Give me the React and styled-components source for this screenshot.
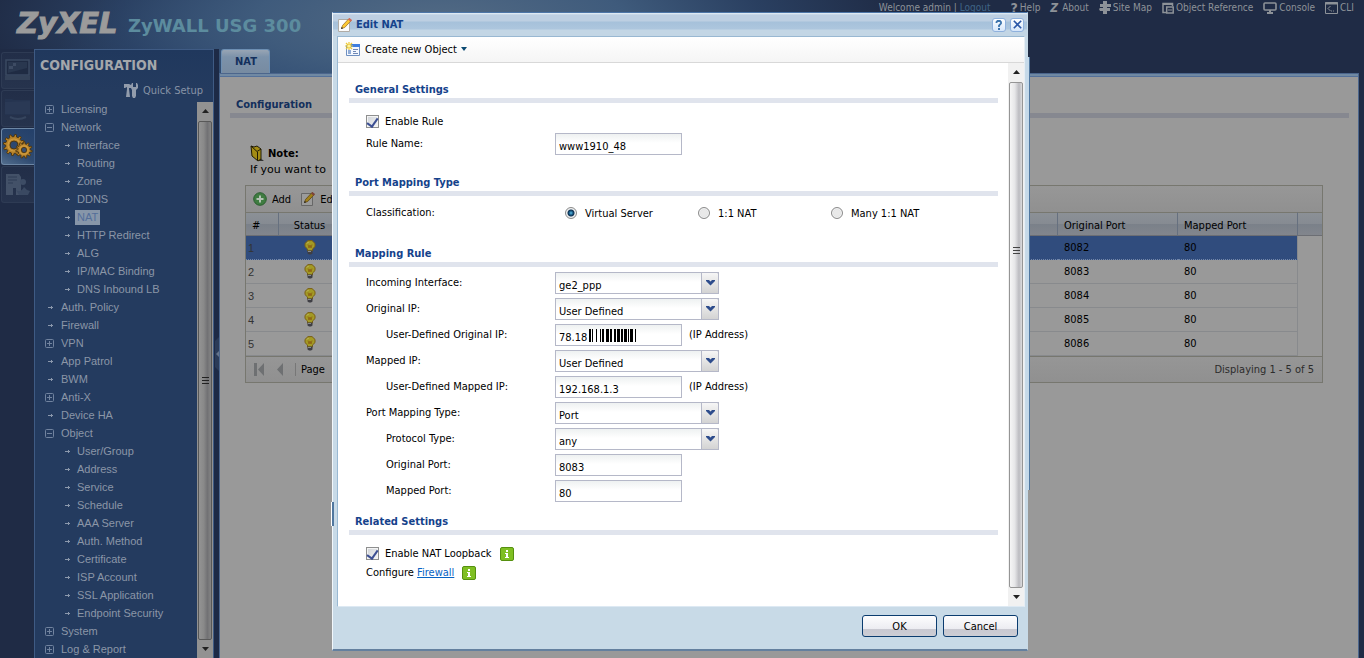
import React, {useState} from 'react'
import styled, {createGlobalStyle} from 'styled-components'

const treeItems = [
  {label: 'Licensing', icon: 'plus'},
  {label: 'Network', icon: 'minus'},
  {label: 'Interface', child: true},
  {label: 'Routing', child: true},
  {label: 'Zone', child: true},
  {label: 'DDNS', child: true},
  {label: 'NAT', child: true, selected: true},
  {label: 'HTTP Redirect', child: true},
  {label: 'ALG', child: true},
  {label: 'IP/MAC Binding', child: true},
  {label: 'DNS Inbound LB', child: true},
  {label: 'Auth. Policy'},
  {label: 'Firewall'},
  {label: 'VPN', icon: 'plus'},
  {label: 'App Patrol'},
  {label: 'BWM'},
  {label: 'Anti-X', icon: 'plus'},
  {label: 'Device HA'},
  {label: 'Object', icon: 'minus'},
  {label: 'User/Group', child: true},
  {label: 'Address', child: true},
  {label: 'Service', child: true},
  {label: 'Schedule', child: true},
  {label: 'AAA Server', child: true},
  {label: 'Auth. Method', child: true},
  {label: 'Certificate', child: true},
  {label: 'ISP Account', child: true},
  {label: 'SSL Application', child: true},
  {label: 'Endpoint Security', child: true},
  {label: 'System', icon: 'plus'},
  {label: 'Log & Report', icon: 'plus'}
]

const natRules = [
  {id: 1, original: '8082', mapped: '80'},
  {id: 2, original: '8083', mapped: '80'},
  {id: 3, original: '8084', mapped: '80'},
  {id: 4, original: '8085', mapped: '80'},
  {id: 5, original: '8086', mapped: '80'}
]

// [x, width] of every bar that masks the address
const maskBars = [
  [0, 2], [3, 1], [7, 1], [11, 1], [13, 2], [17, 3], [21, 2], [25, 2],
  [28, 3], [32, 2], [35, 3], [39, 1], [41, 3], [46, 1]
]

// outline of a cog wheel with its hole
const cogPath = (cx, cy, teeth, outer, inner, hole) => {
  const step = Math.PI * 2 / teeth
  const points = []
  for (let i = 0; i < teeth; i++) {
    const parts = [[inner, 0], [outer, 0.12], [outer, 0.45], [inner, 0.58]]
    parts.forEach(([radius, shift]) => {
      const angle = (i + shift) * step
      points.push(`${cx + radius * Math.cos(angle)} ${cy + radius * Math.sin(angle)}`)
    })
  }
  return `M${points.join('L')}ZM${cx - hole} ${cy}a${hole} ${hole} 0 1 0 ${hole * 2} 0a${hole} ${hole} 0 1 0 ${-hole * 2} 0Z`
}

const TreeIcon = ({type}) => {
  if (!type) {
    return (
      <svg width="9" height="9" viewBox="0 0 9 9" fill="#8b98ac">
        <path d="M3 4h5v1H3zM6 3h1v3H6z" />
      </svg>
    )
  }
  return (
    <svg width="9" height="9" viewBox="0 0 9 9" fill="none" stroke="#71839f">
      <rect x="0.5" y="0.5" width="8" height="8" rx="1" />
      <path d={type === 'plus' ? 'M2 4.5h5M4.5 2v5' : 'M2 4.5h5'} />
    </svg>
  )
}

const MonitorIcon = () => (
  <svg width="26" height="24" viewBox="0 0 26 24">
    <rect x="1" y="1" width="23" height="15" fill="#1f2b43" stroke="#3a4961" strokeWidth="1.5" />
    <path d="M3 3h19v6L3 14z" fill="#29374f" />
    <path d="M4 7h4v3H4zM8 4h3v3H8z" fill="#3d4b63" />
    <path d="M0 17h25v4H0z" fill="#344259" />
  </svg>
)

const ScreenIcon = () => (
  <svg width="26" height="24" viewBox="0 0 26 24">
    <path d="M0 2h7l2 1h16v15H0z" fill="#253450" />
    <path d="M0 5l25-1v13H0z" fill="#2a3955" />
    <path d="M5 20q8 4 16 0" fill="none" stroke="#36455e" strokeWidth="2" />
  </svg>
)

const ReportIcon = () => (
  <svg width="26" height="24" viewBox="0 0 26 24">
    <path d="M1 1h13l2 3v18h-5v-7H8v7H1z" fill="#435168" />
    <path d="M3 4h9M3 7h9M3 10h5" stroke="#2e3c55" />
    <circle cx="18" cy="9" r="3" fill="#3d4c65" />
    <path d="M11 17q5 3 8-3l3 3 3 1-2 4h-9z" fill="#3a4962" />
  </svg>
)

const GearIcon = () => (
  <svg width="30" height="26" viewBox="0 0 30 26" fillRule="evenodd">
    <path d={cogPath(11, 11, 12, 10.6, 8.4, 4)} fill="#b8832a" stroke="#4a3410" strokeWidth="0.9" />
    <circle cx="11" cy="11" r="6" fill="none" stroke="#cf9c3f" strokeWidth="1.2" />
    <path d={cogPath(21, 16, 11, 8.2, 6.2, 2.6)} fill="#b8832a" stroke="#4a3410" strokeWidth="0.9" />
    <circle cx="21" cy="16" r="4.2" fill="none" stroke="#cf9c3f" strokeWidth="1.2" />
    <circle cx="21" cy="16" r="2" fill="#3a506f" />
  </svg>
)

const ToolsIcon = () => (
  <svg width="15" height="15" viewBox="0 0 15 15" fill="#929cac">
    <path d="M0 1h5l2 1v3H5V4h0v2l1 8H2l1-8V4L1 5H0z" />
    <path d="M8 0h1v4h3V0h1l1 2v3l-2 2v6l-1 2H9l-1-2V7L7 5V2z" />
  </svg>
)

const SiteMapIcon = () => (
  <svg width="12" height="13" viewBox="0 0 12 13" fill="#8d9298">
    <path d="M4 0h4v3h4v3H8v1h3v3H8v3H4v-3H1l-1-2 1-1h3V6H1V3h3z" />
  </svg>
)

const ObjectIcon = () => (
  <svg width="12" height="12" viewBox="0 0 12 12">
    <path d="M4 10.500H1V1.500h9.500V4" fill="none" stroke="#8d9298" strokeWidth="1.500" />
    <path d="M1 1h10v2H1z" fill="#8d9298" />
    <path d="M4.700 5h6.500v6H4.700z" fill="none" stroke="#8d9298" strokeWidth="1.500" />
    <path d="M6 8h4" stroke="#8d9298" />
  </svg>
)

const ConsoleIcon = () => (
  <svg width="14" height="12" viewBox="0 0 14 12">
    <rect x="1" y="1" width="12" height="7" rx="1" fill="none" stroke="#8d9298" strokeWidth="1.6" />
    <path d="M4 11h6M7 8v3" stroke="#8d9298" strokeWidth="2" />
  </svg>
)

const CliIcon = () => (
  <svg width="13" height="12" viewBox="0 0 13 12" fill="none" stroke="#8d9298">
    <path d="M0.500 0.500h12v11h-12z" />
    <path d="M0 1.500h13" strokeWidth="2" />
    <path d="M5.500 4L3 6.500 5.500 9M6 9h1M8 9h1" />
  </svg>
)

const NoteIcon = () => (
  <svg width="15" height="17" viewBox="0 0 15 17" stroke="#211c05">
    <path d="M9 12l5 4H8z" fill="#333" stroke="none" />
    <path d="M1 1l3 1 3-1 4 3v10l-3 2-6-5z" fill="#a48c14" />
    <path d="M1 1l6 5.500 4-2.500M7.500 7v8.500" fill="none" />
  </svg>
)

const AddIcon = () => (
  <svg width="14" height="14" viewBox="0 0 14 14">
    <circle cx="7" cy="7" r="6.300" fill="#3f7c41" stroke="#2b5e30" />
    <path d="M7 3.500v7M3.500 7h7" stroke="#b4c2b4" strokeWidth="2" />
  </svg>
)

const EditIcon = ({dim}) => (
  <svg width="14" height="14" viewBox="0 0 14 14">
    <path d="M0.500 1.500h11v12h-11z" fill={dim ? '#9b9b9b' : '#fcfcfc'} stroke={dim ? '#676767' : '#b0aca6'} />
    <path d="M3.500 10.500l1-3 6.500-7 2.300 2-6.600 7z" fill={dim ? '#a08019' : '#fcc832'} stroke={dim ? '#5f4613' : '#a0742b'} strokeWidth="0.8" />
    <path d="M10 1.500l1.500-1.500 2.500 2-1.500 1.800z" fill={dim ? '#7d423b' : '#d5695d'} />
    <path d="M3 11l.7-2 1.500 1.300z" fill="#222" />
  </svg>
)

const BulbIcon = () => (
  <svg width="12" height="15" viewBox="0 0 12 15">
    <path d="M4 .6h4l3 2.800v3.200L8.500 9v2h-5V9L1 6.600V3.400z" fill="#a39a24" stroke="#7a5f16" />
    <path d="M3 3.500L4.500 2" stroke="#c0ba6a" />
    <path d="M4 4.500l1 3.500 1-3 1 3 1-3.500" fill="none" stroke="#8a5a10" strokeWidth="0.8" />
    <path d="M3.500 10.500h5v3l-1.500 1H5l-1.500-1z" fill="#3e3e44" />
    <path d="M4 11.500h3" stroke="#8a8a8a" />
  </svg>
)

const NewObjectIcon = () => (
  <svg width="16" height="14" viewBox="0 0 16 14">
    <path d="M1.500 3.500h13v10h-13z" fill="#f4f8ff" stroke="#6e8fc0" />
    <path d="M6 2h9v3H6z" fill="#3f7fe0" />
    <path d="M3 8h3v4H3z" fill="#90acd6" />
    <path d="M8 7.500h5M8 9.500h3M8 11.500h5" stroke="#6e87b4" />
    <path d="M4 0v8M0 4h8M1 1l6 6M7 1L1 7" stroke="#edc933" strokeWidth="1.200" />
    <circle cx="4" cy="4" r="1.600" fill="#fff3a0" />
  </svg>
)

const ChevronIcon = () => (
  <svg width="9" height="6" viewBox="0 0 9 6" fill="#2d4c8c">
    <path d="M0 0h3l1.500 1.500L6 0h3v1L4.500 5.500 0 1z" />
  </svg>
)

const InfoIcon = () => (
  <svg width="14" height="14" viewBox="0 0 14 14">
    <rect x="0.500" y="0.500" width="13" height="13" rx="1.500" fill="#7fbf22" stroke="#55900f" />
    <path d="M6 3h2v2H6zM5 6h3v4h1v1H5v-1h1V7H5z" fill="#fff" />
  </svg>
)

const MaskedDigits = () => (
  <svg width="48" height="13" viewBox="0 0 48 13">
    {maskBars.map(([x, width]) => (
      <rect key={x} x={x} y="0" width={width} height="13" fill="#000" />
    ))}
  </svg>
)

const ArrowIcon = ({down}) => (
  <svg width="7" height="4" viewBox="0 0 7 4">
    <path d={down ? 'M0 0h7L3.500 4z' : 'M0 4h7L3.500 0z'} fill="#222" />
  </svg>
)

const ScrollBar = ({dim}) => (
  <Scroll $dim={dim} aria-hidden="true">
    <ScrollArrow>
      <ArrowIcon />
    </ScrollArrow>
    <ScrollThumb $dim={dim}>
      <svg width="7" height="8" viewBox="0 0 7 8">
        <path d="M0 0.500h7M0 3.500h7M0 6.500h7" stroke={dim ? '#222' : '#444'} />
      </svg>
    </ScrollThumb>
    <ScrollArrow>
      <ArrowIcon down />
    </ScrollArrow>
  </Scroll>
)

const TextField = ({id, label, indent, value, note, masked}) => (
  <FormRow>
    <FieldLabel htmlFor={id} $indent={indent}>
      {label}
    </FieldLabel>
    <Control>
      <TextInput id={id} type="text" defaultValue={value} />
      {masked && (
        <Mask>
          <MaskedDigits />
        </Mask>
      )}
    </Control>
    {note && <FieldNote>{note}</FieldNote>}
  </FormRow>
)

const SelectField = ({id, label, indent, value}) => (
  <FormRow>
    <FieldLabel htmlFor={id} $indent={indent}>
      {label}
    </FieldLabel>
    <Control>
      <Select id={id} defaultValue={value}>
        <option>{value}</option>
      </Select>
      <SelectArrow>
        <ChevronIcon />
      </SelectArrow>
    </Control>
  </FormRow>
)

const EditNatDialog = () => {
  const [type, setType] = useState('Virtual Server')
  return (
    <Overlay>
      <Dialog role="dialog" aria-labelledby="dialog-title">
        <TitleBar>
          <EditIcon />
          <DialogTitle id="dialog-title">Edit NAT</DialogTitle>
          <TitleButton type="button" aria-label="Help">
            <svg width="8" height="10" viewBox="0 0 8 10">
              <path d="M1.500 3V2L2.500 1h2.500l1 1v1.500L4 5.500V7" fill="none" stroke="#3d74ad" strokeWidth="1.800" />
              <path d="M3 8h2v2H3z" fill="#3d74ad" />
            </svg>
          </TitleButton>
          <TitleButton type="button" aria-label="Close">
            <svg width="9" height="9" viewBox="0 0 9 9">
              <path d="M.8.800l7.400 7.400M8.200.800L.8 8.200" stroke="#2b57a8" strokeWidth="1.600" />
            </svg>
          </TitleButton>
        </TitleBar>
        <DialogPanel>
          <DialogToolbar>
            <MenuButton type="button">
              <NewObjectIcon />
              Create new Object
              <svg width="6" height="4" viewBox="0 0 6 4">
                <path d="M0 0h6L3 4z" fill="#0c4a72" />
              </svg>
            </MenuButton>
          </DialogToolbar>
          <DialogBody>
            <Form>
              <SectionTitle>General Settings</SectionTitle>
              <Fields $top={9} $bottom={16}>
                <CheckRow>
                  <Checkbox id="enable-rule" type="checkbox" defaultChecked />
                  <label htmlFor="enable-rule">Enable Rule</label>
                </CheckRow>
                <TextField id="rule-name" label="Rule Name:" value="www1910_48" />
              </Fields>
              <SectionTitle>Port Mapping Type</SectionTitle>
              <Fields $top={4} $bottom={18}>
                <FormRow role="radiogroup" aria-labelledby="classification">
                  <FieldLabel as="span" id="classification">
                    Classification:
                  </FieldLabel>
                  {['Virtual Server', '1:1 NAT', 'Many 1:1 NAT'].map(name => (
                    <RadioLabel key={name}>
                      <Radio
                        type="radio"
                        name="classification"
                        checked={type === name}
                        onChange={() => setType(name)}
                      />
                      {name}
                    </RadioLabel>
                  ))}
                </FormRow>
              </Fields>
              <SectionTitle>Mapping Rule</SectionTitle>
              <Fields $top={3} $bottom={8}>
                <SelectField id="incoming" label="Incoming Interface:" value="ge2_ppp" />
                <SelectField id="original-ip" label="Original IP:" value="User Defined" />
                <TextField
                  id="user-original-ip"
                  label="User-Defined Original IP:"
                  value="78.18"
                  note="(IP Address)"
                  indent
                  masked
                />
                <SelectField id="mapped-ip" label="Mapped IP:" value="User Defined" />
                <TextField
                  id="user-mapped-ip"
                  label="User-Defined Mapped IP:"
                  value="192.168.1.3"
                  note="(IP Address)"
                  indent
                />
                <SelectField id="mapping-type" label="Port Mapping Type:" value="Port" />
                <SelectField id="protocol" label="Protocol Type:" value="any" indent />
                <TextField id="original-port" label="Original Port:" value="8083" indent />
                <TextField id="mapped-port" label="Mapped Port:" value="80" indent />
              </Fields>
              <SectionTitle>Related Settings</SectionTitle>
              <Fields $top={9} $bottom={24}>
                <CheckRow>
                  <Checkbox id="loopback" type="checkbox" defaultChecked />
                  <label htmlFor="loopback">Enable NAT Loopback</label>
                  <InfoSlot>
                    <InfoIcon />
                  </InfoSlot>
                </CheckRow>
                <CheckRow>
                  <span>
                    Configure <FormLink href="#firewall">Firewall</FormLink>
                  </span>
                  <InfoSlot>
                    <InfoIcon />
                  </InfoSlot>
                </CheckRow>
              </Fields>
            </Form>
            <ScrollBar />
          </DialogBody>
        </DialogPanel>
        <DialogFooter>
          <DialogButton type="button">OK</DialogButton>
          <DialogButton type="button">Cancel</DialogButton>
        </DialogFooter>
      </Dialog>
    </Overlay>
  )
}

const Sidebar = () => (
  <SidePanel>
    <SideTitle>CONFIGURATION</SideTitle>
    <QuickSetup href="#setup">
      <ToolsIcon />
      Quick Setup
    </QuickSetup>
    <TreeArea>
      <Tree>
        {treeItems.map(({label, icon, child, selected}) => (
          <TreeRow key={label} $child={child}>
            <TreeIcon type={icon} />
            <TreeLink href={`#${label}`} $selected={selected}>
              {label}
            </TreeLink>
          </TreeRow>
        ))}
      </Tree>
      <ScrollBar dim />
    </TreeArea>
  </SidePanel>
)

const RuleGrid = () => (
  <Grid>
    <GridToolbar>
      <GridButton type="button">
        <AddIcon />
        Add
      </GridButton>
      <GridButton type="button">
        <EditIcon dim />
        Edit
      </GridButton>
    </GridToolbar>
    <Table>
      <colgroup>
        <col width="33" />
        <col width="62" />
        <col />
        <col width="120" />
        <col width="120" />
        <col width="24" />
      </colgroup>
      <thead>
        <tr>
          <Th>#</Th>
          <Th $center>Status</Th>
          <Th />
          <Th>Original Port</Th>
          <Th>Mapped Port</Th>
          <Th />
        </tr>
      </thead>
      <tbody>
        {natRules.map(({id, original, mapped}) => (
          <GridRow key={id} $selected={id === 1}>
            <NumberCell>{id}</NumberCell>
            <Td $center>
              <BulbIcon />
            </Td>
            <Td />
            <Td>{original}</Td>
            <Td>{mapped}</Td>
            <FillerCell />
          </GridRow>
        ))}
      </tbody>
    </Table>
    <GridFooter>
      <svg width="36" height="13" viewBox="0 0 36 13" fill="#6e7072">
        <path d="M2 0h3v13H2zM12 0v13L6 6.500zM31 0v13l-6-6.500z" />
      </svg>
      <PageText>Page</PageText>
      <Displaying>Displaying 1 - 5 of 5</Displaying>
    </GridFooter>
  </Grid>
)

const App = () => (
  <>
    <GlobalStyle />
    <Page>
      <Header>
        <Logo>ZyXEL</Logo>
        <Product>ZyWALL USG 300</Product>
        <HeaderLinks>
          <span>
            Welcome admin | <Logout href="#logout">Logout</Logout>
          </span>
          <HeaderLink href="#help">
            <HelpMark>?</HelpMark>Help
          </HeaderLink>
          <HeaderLink href="#about">
            <AboutMark>Z</AboutMark>About
          </HeaderLink>
          <HeaderLink href="#sitemap">
            <SiteMapIcon />
            Site Map
          </HeaderLink>
          <HeaderLink href="#objects">
            <ObjectIcon />
            Object Reference
          </HeaderLink>
          <HeaderLink href="#console">
            <ConsoleIcon />
            Console
          </HeaderLink>
          <HeaderLink href="#cli">
            <CliIcon />
            CLI
          </HeaderLink>
        </HeaderLinks>
      </Header>
      <Body>
        <Rail>
          <RailButton type="button" aria-label="Dashboard">
            <MonitorIcon />
          </RailButton>
          <RailButton type="button" aria-label="Monitor">
            <ScreenIcon />
          </RailButton>
          <RailButton type="button" aria-label="Configuration" $active>
            <GearIcon />
          </RailButton>
          <RailButton type="button" aria-label="Maintenance">
            <ReportIcon />
          </RailButton>
        </Rail>
        <Sidebar />
        <Splitter>
          <svg width="4" height="34" viewBox="0 0 4 34">
            <path d="M4 0v34L0 30V4z" fill="#2b3b58" />
            <path d="M4 14v6L1 17z" fill="#65748b" />
          </svg>
        </Splitter>
        <Main>
          <TabBar>
            <Tab type="button">NAT</Tab>
          </TabBar>
          <Panel>
            <PanelTitle>Configuration</PanelTitle>
            <Note>
              <NoteHead>
                <NoteIcon />
                <strong>Note:</strong>
              </NoteHead>
              If you want to
            </Note>
            <RuleGrid />
          </Panel>
        </Main>
      </Body>
      <EditNatDialog />
    </Page>
  </>
)

export default App

const tahoma = `'DejaVu Sans Condensed', 'DejaVu Sans', sans-serif`

const GlobalStyle = createGlobalStyle`
  * {
    box-sizing: border-box;
  }

  body {
    margin: 0;
    font-family: ${tahoma};
    font-size: 11px;
    color: #000;
    background: #1f2b45;
  }

  button, input, select {
    font: inherit;
    color: inherit;
    margin: 0;
  }

  svg {
    display: block;
    flex: none;
  }
`
const Page = styled.div`
  position: relative;
  display: flex;
  flex-direction: column;
  min-height: 100vh;
  overflow: hidden;
  background: radial-gradient(ellipse 460px 130px at 440px 20px, #526a84 0%, #3f5b7c 40%, rgba(49, 77, 115, 0.6) 70%, rgba(31, 43, 69, 0) 100%),
    radial-gradient(ellipse 260px 180px at 300px 110px, #2e4f7f 0%, rgba(31, 43, 69, 0) 100%),
    #1f2b45;
`
const Header = styled.header`
  display: flex;
  height: 49px;
  padding-left: 17px;
  color: #8d9298;
`
const Logo = styled.div`
  width: 111px;
  font: italic 900 29px/46px 'DejaVu Sans', sans-serif;
  color: #9b9b9b;
  -webkit-text-stroke: 1px #9b9b9b;
`
const Product = styled.div`
  font: bold 18px/52px 'DejaVu Sans', sans-serif;
  color: #5c8c9e;
  white-space: nowrap;
`
const HeaderLinks = styled.nav`
  display: flex;
  gap: 10px;
  margin-left: auto;
  padding-right: 10px;
  height: 15px;
  align-items: center;
  font-size: 10px;
  white-space: nowrap;
`
const HeaderLink = styled.a`
  display: flex;
  align-items: center;
  gap: 2px;
  color: inherit;
  text-decoration: none;
`
const Logout = styled.a`
  margin-right: 10px;
  color: #3f6587;
  text-decoration: none;
`
const HelpMark = styled.span`
  font-size: 14px;
  font-weight: bold;
`
const AboutMark = styled.span`
  margin-right: 2px;
  font-size: 12px;
  font-style: italic;
  font-weight: bold;
`
const Body = styled.div`
  display: flex;
  flex: 1;
`
const Rail = styled.nav`
  display: flex;
  flex-direction: column;
  gap: 1px;
  width: 34px;
  padding: 3px 0 0 1px;
  background: #1f2b45;
`
const RailButton = styled.button`
  display: flex;
  align-items: center;
  justify-content: center;
  height: 37px;
  padding: 0;
  border: 1px solid ${props => (props.$active ? '#6d87a5' : '#2e3b54')};
  border-right: 0;
  border-radius: 3px 0 0 3px;
  background: ${props =>
    props.$active
      ? 'linear-gradient(25deg, #526d8d 0%, #2f4a70 35%, #24406a 100%)'
      : 'linear-gradient(#222e48, #26334d)'};
`
const SidePanel = styled.aside`
  display: flex;
  flex-direction: column;
  width: 180px;
  border: 1px solid #3f5b84;
  border-bottom: 0;
  background: linear-gradient(#20385d 0, #243b5f 40px);
`
const SideTitle = styled.h1`
  margin: 0;
  padding: 6px 0 0 5px;
  font: bold 14px/18px 'DejaVu Sans Condensed', sans-serif;
  color: #a4a7ab;
`
const QuickSetup = styled.a`
  display: flex;
  align-items: center;
  justify-content: flex-end;
  gap: 4px;
  height: 24px;
  margin-top: 4px;
  padding-right: 10px;
  color: #8793a6;
  text-decoration: none;
`
const TreeArea = styled.div`
  display: flex;
  flex: 1;
`
const Tree = styled.ul`
  flex: 1;
  margin: -2px 0 0;
  padding: 0;
  list-style: none;
  font-family: 'Liberation Sans', sans-serif;
`
const TreeRow = styled.li`
  display: flex;
  align-items: center;
  gap: ${props => (props.$child ? 4 : 5)}px;
  height: 18px;
  padding-left: ${props => (props.$child ? 27 : 10)}px;
`
const TreeLink = styled.a`
  padding: 0 2px;
  line-height: 15px;
  white-space: nowrap;
  text-decoration: none;
  color: ${props => (props.$selected ? '#536e9a' : '#8b96a7')};
  background: ${props => (props.$selected ? '#8796a9' : 'transparent')};
`
const Scroll = styled.div`
  display: flex;
  flex-direction: column;
  width: 16px;
  background: ${props => (props.$dim ? '#929292' : '#f1f1f1')};
`
const ScrollArrow = styled.div`
  display: flex;
  align-items: center;
  justify-content: center;
  height: 18px;
`
const ScrollThumb = styled.div`
  display: flex;
  flex: 1;
  align-items: flex-start;
  justify-content: center;
  margin: 1px 1px 0;
  padding-top: ${props => (props.$dim ? 255 : 164)}px;
  border: 1px solid ${props => (props.$dim ? '#585858' : '#959595')};
  border-radius: 2px;
  background: ${props =>
    props.$dim
      ? 'linear-gradient(90deg, #939393, #898989 40%, #717174 70%, #858585)'
      : 'linear-gradient(90deg, #f6f6f6, #e6e6e8 40%, #bbbbc0 75%, #dcdcde)'};
`
const Splitter = styled.div`
  display: flex;
  align-items: center;
  justify-content: flex-end;
  width: 5px;
  background: #1d2a46;
`
const Main = styled.main`
  display: flex;
  flex: 1;
  flex-direction: column;
  min-width: 0;
  margin-right: 5px;
`
const TabBar = styled.div`
  display: flex;
  height: 24px;
  padding-left: 2px;
`
const Tab = styled.button`
  width: 49px;
  padding: 0 0 0 1px;
  border: 1px solid #6d8fb3;
  border-bottom: 0;
  border-radius: 3px 3px 0 0;
  background: linear-gradient(#98a5b4, #7c92aa 30%, #778ba1);
  font-weight: bold;
  color: #132f5c;
`
const Panel = styled.section`
  flex: 1;
  padding: 18px 9px 0 10px;
  border: 1px solid #4c668c;
  border-bottom: 0;
  background: #999;
  box-shadow: inset 0 2px 0 #7089a3, inset 0 3px 0 #54719a;
`
const PanelTitle = styled.h2`
  margin: 0;
  padding: 4px 6px 0;
  border-bottom: 5px solid #868890;
  font-size: 11px;
  line-height: 17px;
  color: #132f5c;
`
const Note = styled.div`
  padding: 27px 20px 0;
  font: 11px/16px 'DejaVu Sans', sans-serif;
`
const NoteHead = styled.div`
  display: flex;
  align-items: center;
  gap: 3px;
  height: 17px;
  font-size: 10px;
`
const Grid = styled.div`
  margin: 7px 26px 0 15px;
  border: 1px solid #77776f;
`
const GridToolbar = styled.div`
  display: flex;
  align-items: center;
  gap: 10px;
  height: 26px;
  padding-left: 7px;
  background: linear-gradient(#979797, #909090);
`
const GridButton = styled.button`
  display: flex;
  align-items: center;
  gap: 5px;
  padding: 0;
  border: 0;
  background: none;
`
const Table = styled.table`
  width: 100%;
  table-layout: fixed;
  border-collapse: separate;
  border-spacing: 0;
`
const Th = styled.th`
  height: 24px;
  padding: 2px 6px 0;
  border-top: 1px solid #77776f;
  border-bottom: 1px solid #6c6e74;
  border-right: 1px solid #66707f;
  background: linear-gradient(#8b9096 0, #868b92 50%, #7a8089 50%, #82868d 100%);
  font-weight: normal;
  text-align: ${props => (props.$center ? 'center' : 'left')};

  &:last-child {
    border-right: 0;
  }
`
const Td = styled.td`
  height: 24px;
  padding: 0 6px;
  border-bottom: 1px solid #888a8d;
  text-align: ${props => (props.$center ? 'center' : 'left')};

  svg {
    margin: 0 auto;
  }
`
const NumberCell = styled(Td)`
  padding: 0 2px;
  font-family: 'Liberation Sans', sans-serif;
  color: #333;
`
const FillerCell = styled(Td)`
  border: 0;
`
const GridRow = styled.tr`
  ${Td}:not(:last-child) {
    background: ${props => (props.$selected ? '#304c7d' : 'transparent')};
    border-bottom: 1px ${props => (props.$selected ? 'dotted #7286a8' : 'solid #888a8d')};
  }

  ${Td}:nth-child(5) {
    border-right: 1px solid #888a8d;
  }
`
const GridFooter = styled.div`
  display: flex;
  align-items: center;
  height: 26px;
  padding: 0 8px 0 6px;
  border-top: 1px solid #77776f;
  background: linear-gradient(#969696, #909090);
`
const PageText = styled.span`
  margin-left: 7px;
  padding-left: 5px;
  border-left: 1px solid #777;
`
const Displaying = styled.span`
  margin-left: auto;
  color: #2c2c2c;
`
const Overlay = styled.div`
  position: absolute;
  inset: 12px 4px auto 0;
  display: flex;
  justify-content: center;
`
const Dialog = styled.section`
  position: relative;
  width: 696px;
  padding: 0 2px 0 4px;
  border: 1px solid #f2f7fb;
  border-top-color: #4d76a8;
  border-right-color: #c8dae7;
  border-bottom: 2px solid #64809f;
  background: #c8dae7;

  /* frame of the window below, which shows past both edges */
  &::before {
    content: '';
    position: absolute;
    top: 489px;
    left: -2px;
    width: 2px;
    height: 24px;
    border-left: 1px solid #fff;
    background: #50779f;
  }

  &::after {
    content: '';
    position: absolute;
    top: 44px;
    right: -3px;
    width: 3px;
    height: 433px;
    border-right: 1px solid #50779f;
    background: #c5d9e9;
  }
`
const TitleBar = styled.div`
  display: flex;
  align-items: center;
  gap: 4px;
  height: 23px;
  margin: 0 -2px 0 -4px;
  padding: 0 3px 0 5px;
  background: linear-gradient(#e8f1f8 0, #bdcfe2 2px, #bdcfe2 8px, #a6c1da 9px, #adc6de 16px, #c3d6e5 17px);
`
const DialogTitle = styled.h2`
  flex: 1;
  margin: 0;
  font-size: 11px;
  color: #15428b;
`
const TitleButton = styled.button`
  display: flex;
  align-items: center;
  justify-content: center;
  width: 14px;
  height: 14px;
  padding: 0;
  border: 1px solid #8fb1dd;
  border-radius: 3px;
  background: linear-gradient(#fff, #d5e6fa);
`
const DialogPanel = styled.div`
  border: 1px solid #99b8d2;
  border-right-color: #e6eef5;
  border-bottom-color: #dde9f3;
  background: #fff;
`
const DialogToolbar = styled.div`
  height: 26px;
  padding: 0 7px;
  border-bottom: 1px solid #d8d8d8;
  background: linear-gradient(#fff, #f5f5f5);
`
const MenuButton = styled.button`
  display: flex;
  align-items: center;
  gap: 4px;
  height: 24px;
  padding: 0;
  border: 0;
  background: none;
`
const DialogBody = styled.div`
  display: flex;
`
const Form = styled.form`
  flex: 1;
  padding: 17px 10px 0 11px;
`
const SectionTitle = styled.h3`
  margin: 0;
  padding: 2px 6px 0;
  border-bottom: 5px solid #e0e4ed;
  font-size: 11px;
  line-height: 16px;
  color: #15428b;
`
const Fields = styled.div`
  padding: ${props => props.$top}px 17px ${props => props.$bottom}px;
`
const FormRow = styled.div`
  display: flex;
  align-items: center;
  height: 26px;
`
const FieldLabel = styled.label`
  width: 189px;
  padding: 0 0 2px ${props => (props.$indent ? 20 : 0)}px;
`
const FieldNote = styled.span`
  padding: 0 0 2px 7px;
`
const Control = styled.div`
  position: relative;
  display: flex;
`
const TextInput = styled.input`
  width: 127px;
  height: 22px;
  padding: 4px 3px 0;
  border: 1px solid #b5b8c8;
  border-radius: 0;
  background: linear-gradient(#eef1f1, #fff 9px);
  outline: 0;
`
const Mask = styled.span`
  position: absolute;
  top: 5px;
  left: 34px;
`
const Select = styled.select`
  width: 164px;
  height: 22px;
  padding: 4px 20px 0 3px;
  border: 1px solid #b5b8c8;
  border-radius: 0;
  background: linear-gradient(#eef1f1, #fff 9px);
  outline: 0;
  appearance: none;
`
const SelectArrow = styled.span`
  position: absolute;
  top: 0;
  right: 0;
  display: flex;
  justify-content: center;
  width: 18px;
  height: 22px;
  padding-top: 7px;
  border: 1px solid #b5b8c8;
  border-radius: 0 2px 0 0;
  background: linear-gradient(#f6f6f6, #d3d3d3);
  pointer-events: none;
`
const CheckRow = styled.div`
  display: flex;
  align-items: center;
  gap: 6px;
  height: 19px;
`
const InfoSlot = styled.span`
  margin-left: 2px;
`
const FormLink = styled.a`
  color: #0763c4;
`
const Checkbox = styled.input`
  display: flex;
  justify-content: center;
  width: 13px;
  height: 13px;
  border: 1px solid #8e8f8f;
  background: linear-gradient(135deg, #cfd3d8, #f6f6f6);
  box-shadow: inset 0 0 0 1px #f4f4f4;
  appearance: none;

  &:checked::after {
    content: '';
    width: 5px;
    height: 9px;
    border: solid #3c4f93;
    border-width: 0 2px 2px 0;
    transform: rotate(35deg);
  }
`
const RadioLabel = styled.label`
  display: flex;
  align-items: center;
  gap: 8px;
  width: 133px;
  padding-left: 10px;
`
const Radio = styled.input`
  width: 12px;
  height: 12px;
  border: 1px solid #8b8b8b;
  border-radius: 50%;
  background: radial-gradient(#e9e9e9 40%, #d2d5d8);
  box-shadow: inset 0 0 0 1px #f4f4f4;
  appearance: none;

  &:checked {
    background: radial-gradient(circle at 5px 5px, #5cc0e8 0, #14537f 2px, #0f3050 3px, #dfe3e6 4px);
  }
`
const DialogFooter = styled.div`
  display: flex;
  justify-content: flex-end;
  gap: 6px;
  padding: 8px 7px 12px;
`
const DialogButton = styled.button`
  width: 75px;
  height: 22px;
  padding: 0;
  border: 1px solid #0b3c6f;
  border-radius: 3px;
  background: linear-gradient(#fdfdfe 0, #ececf1 65%, #c9c9d1 66%, #cdcdd4 100%);
`
